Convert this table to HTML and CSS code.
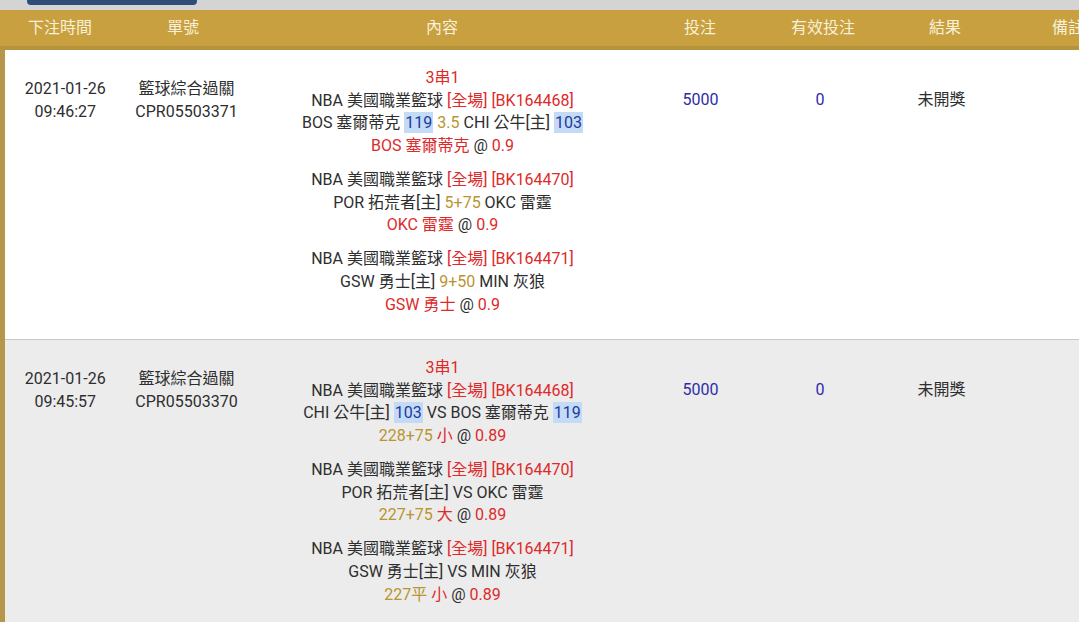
FILE: index.html
```html
<!DOCTYPE html>
<html lang="zh-Hant">

<head>
    <meta charset="UTF-8">
    <meta name="viewport" content="width=device-width, initial-scale=1.0">
    <title>注單記錄</title>
    <link rel="stylesheet" href="styles.css">
</head>

<body>
    <div class="topbar">
        <span class="tab"></span>
    </div>
    <div class="board">
        <table class="bets">
            <colgroup>
                <col class="h-time">
                <col class="h-no">
                <col class="h-content">
                <col class="h-bet">
                <col class="h-valid">
                <col class="h-result">
                <col class="h-note">
            </colgroup>
            <thead>
                <tr>
                    <th>下注時間</th>
                    <th>單號</th>
                    <th>內容</th>
                    <th>投注</th>
                    <th>有效投注</th>
                    <th>結果</th>
                    <th>備註</th>
                </tr>
            </thead>
        </table>
        <table class="bets">
            <colgroup>
                <col class="c-time">
                <col class="c-no">
                <col class="c-content">
                <col class="c-bet">
                <col class="c-valid">
                <col class="c-result">
                <col class="c-note">
            </colgroup>
            <tbody>
                <tr>
                    <td class="time">2021-01-26<br>09:46:27</td>
                    <td class="time">籃球綜合過關<br>CPR05503371</td>
                    <td class="content">
                        <div class="red">3串1</div>
                        <div class="leg">
                            <div>NBA 美國職業籃球 <span class="red">[全場] [BK164468]</span></div>
                            <div>BOS 塞爾蒂克 <span class="hl">119</span> <span class="gold">3.5</span> CHI 公牛[主] <span class="hl">103</span></div>
                            <div class="red">BOS 塞爾蒂克 <span class="dark">@</span> 0.9</div>
                        </div>
                        <div class="leg">
                            <div>NBA 美國職業籃球 <span class="red">[全場] [BK164470]</span></div>
                            <div>POR 拓荒者[主] <span class="gold">5+75</span> OKC 雷霆</div>
                            <div class="red">OKC 雷霆 <span class="dark">@</span> 0.9</div>
                        </div>
                        <div class="leg">
                            <div>NBA 美國職業籃球 <span class="red">[全場] [BK164471]</span></div>
                            <div>GSW 勇士[主] <span class="gold">9+50</span> MIN 灰狼</div>
                            <div class="red">GSW 勇士 <span class="dark">@</span> 0.9</div>
                        </div>
                    </td>
                    <td class="amount">5000</td>
                    <td class="amount">0</td>
                    <td class="result">未開獎</td>
                    <td class="result"></td>
                </tr>
                <tr class="alt">
                    <td class="time">2021-01-26<br>09:45:57</td>
                    <td class="time">籃球綜合過關<br>CPR05503370</td>
                    <td class="content">
                        <div class="red">3串1</div>
                        <div class="leg">
                            <div>NBA 美國職業籃球 <span class="red">[全場] [BK164468]</span></div>
                            <div>CHI 公牛[主] <span class="hl">103</span> VS BOS 塞爾蒂克 <span class="hl">119</span></div>
                            <div><span class="gold">228+75</span> <span class="red">小</span> @ <span class="red">0.89</span></div>
                        </div>
                        <div class="leg">
                            <div>NBA 美國職業籃球 <span class="red">[全場] [BK164470]</span></div>
                            <div>POR 拓荒者[主] VS OKC 雷霆</div>
                            <div><span class="gold">227+75</span> <span class="red">大</span> @ <span class="red">0.89</span></div>
                        </div>
                        <div class="leg">
                            <div>NBA 美國職業籃球 <span class="red">[全場] [BK164471]</span></div>
                            <div>GSW 勇士[主] VS MIN 灰狼</div>
                            <div><span class="gold">227平</span> <span class="red">小</span> @ <span class="red">0.89</span></div>
                        </div>
                    </td>
                    <td class="amount">5000</td>
                    <td class="amount">0</td>
                    <td class="result">未開獎</td>
                    <td class="result"></td>
                </tr>
            </tbody>
        </table>
    </div>
</body>

</html>
```

FILE: styles.css
```css
* {
    margin: 0;
    padding: 0;
    box-sizing: border-box;
}

html,
body {
    overflow: hidden;
}

body {
    background-color: #ececec;
    font-family: Roboto, "Noto Sans CJK TC", sans-serif;
    font-size: 16px;
    color: #2e2e2e;
}

.topbar {
    height: 10px;
    background-color: #d4d4d4;
    padding-left: 27px;
}

.tab {
    display: block;
    width: 170px;
    height: 5px;
    background-color: #2f4b7a;
    border-radius: 0 0 4px 4px;
}

.board {
    width: 100%;
    overflow: hidden;
}

.bets {
    width: 1130px;
    table-layout: fixed;
    border-collapse: collapse;
}

/* header columns */
.h-time { width: 120px; }
.h-no { width: 126px; }
.h-content { width: 392px; }
.h-bet { width: 124px; }
.h-valid { width: 122px; }
.h-result { width: 122px; }
.h-note { width: 124px; }

/* body columns */
.c-time { width: 123px; }
.c-no { width: 122px; }
.c-content { width: 390px; }
.c-bet { width: 126px; }
.c-valid { width: 113px; }
.c-result { width: 130px; }
.c-note { width: 126px; }

th {
    height: 38px;
    background-color: #c9a03f;
    border-bottom: 4px solid #b6943e;
    color: #f8f0d8;
    font-weight: normal;
    text-align: center;
    line-height: 34px;
    white-space: nowrap;
}

tbody tr {
    background-color: #fff;
    border-bottom: 1px solid #c8c8c8;
}

tbody tr.alt {
    background-color: #ececec;
}

td {
    vertical-align: top;
    text-align: center;
    line-height: 22.7px;
}

td:first-child {
    border-left: 5px solid #b5964a;
}

.time {
    padding-top: 28px;
}

.content {
    padding: 17px 0 22.5px;
}

.leg + .leg {
    margin-top: 11.2px;
}

.amount {
    padding-top: 39px;
    color: #2c2ca8;
}

.result {
    padding-top: 39px;
}

.red {
    color: #dd2a2a;
}

.dark {
    color: #2e2e2e;
}

.gold {
    color: #b8952f;
}

.hl {
    background-color: #c3dbf6;
    color: #1c3a9c;
    padding: 1px 1px;
}
```
